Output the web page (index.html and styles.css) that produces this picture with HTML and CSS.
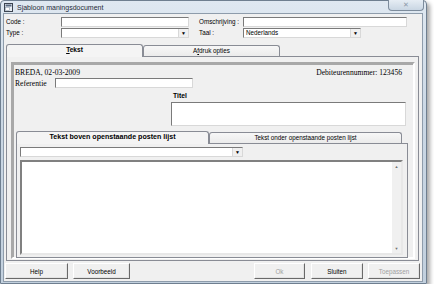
FILE: index.html
```html
<!DOCTYPE html>
<html lang="nl">
<head>
    <meta charset="UTF-8">
    <title>Sjabloon maningsdocument</title>
    <link rel="stylesheet" href="styles.css">
</head>
<body>
    <div class="window">
        <div class="titlebar">
            <svg class="app-icon" width="9" height="9" viewBox="0 0 9 9">
                <rect x="0.5" y="0.5" width="8" height="8" fill="#e8eef4" stroke="#3c4450"/>
                <rect x="1.5" y="1.5" width="6" height="2" fill="#5a6a80"/>
                <rect x="1.5" y="4.5" width="4" height="3" fill="#ffffff" stroke="#8090a0" stroke-width="0.5"/>
            </svg>
            <span class="title">Sjabloon maningsdocument</span>
            <div class="close-btn">✕</div>
        </div>

        <div class="client">
            <div class="header-form">
                <label>Code :</label>
                <div class="field"></div>
                <label class="second">Omschrijving :</label>
                <div class="field"></div>

                <label>Type :</label>
                <div class="field select"><span class="value"></span><span class="drop">▼</span></div>
                <label class="second">Taal :</label>
                <div class="field select short"><span class="value">Nederlands</span><span class="drop">▼</span></div>
            </div>

            <div class="tabs">
                <div class="tab active"><u>T</u>ekst</div>
                <div class="tab">A<u>f</u>druk opties</div>
            </div>

            <div class="tab-panel">
                <div class="group">
                    <div class="letter-head">
                        <span>BREDA, 02-03-2009</span>
                        <span>Debiteurennummer: 123456</span>
                    </div>
                    <div class="ref-row">
                        <span class="ref-label">Referentie</span>
                        <div class="field ref"></div>
                    </div>
                    <div class="titel-label">Titel</div>
                    <div class="field titel"></div>

                    <div class="tabs inner">
                        <div class="tab active">Tekst boven openstaande posten lijst</div>
                        <div class="tab">Tekst onder openstaande posten lijst</div>
                    </div>
                    <div class="inner-panel">
                        <div class="field select wide"><span class="value"></span><span class="drop">▼</span></div>
                        <div class="field memo">
                            <div class="scrollbar">
                                <span class="arrow">▲</span>
                                <span class="arrow">▼</span>
                            </div>
                        </div>
                    </div>
                </div>
            </div>

            <div class="buttons">
                <button class="btn help">Help</button>
                <button class="btn preview">Voorbeeld</button>
                <div class="spacer"></div>
                <button class="btn ok" disabled>Ok</button>
                <button class="btn">Sluiten</button>
                <button class="btn" disabled>Toepassen</button>
            </div>
        </div>
    </div>
</body>
</html>
```

FILE: styles.css
```css
body {
    margin: 0;
    background: #ffffff;
    font-family: "Liberation Sans", Arial, sans-serif;
    font-size: 6.3px;
    color: #000;
}
.window {
    width: 420px;
    padding: 0 3px 1px 2px;
    border: 1px solid #6f7f90;
    border-radius: 4px 4px 0 0;
    background: linear-gradient(180deg, #dfe8f1 0%, #cbd8e5 40%, #c2d0de 100%);
    box-shadow: 3px 3px 4px rgba(0, 0, 0, 0.35);
}
.titlebar {
    height: 12px;
    display: flex;
    align-items: center;
    position: relative;
}
.app-icon {
    margin: 1px 4px 0 1px;
}
.title {
    font-size: 7px;
    color: #1e2a38;
    padding-top: 1px;
}
.close-btn {
    position: absolute;
    right: -1px;
    top: -1px;
    width: 34px;
    height: 10px;
    border: 1px solid #7d8c9c;
    border-top: none;
    border-radius: 0 0 4px 4px;
    background: linear-gradient(180deg, #e6edf4, #c9d6e3);
    color: #8c99a8;
    font-size: 7px;
    text-align: center;
    line-height: 10px;
}
.client {
    background: #f0f0f0;
    border: 1px solid #8e9cab;
    padding: 3px 0 2px 0;
}

/* top form */
.header-form {
    display: grid;
    grid-template-columns: 55px 128px 54px 164px;
    grid-auto-rows: 10px;
    row-gap: 1px;
    padding-left: 2px;
    align-items: center;
}
.header-form label {
    line-height: 10px;
}
.header-form label.second {
    padding-left: 10px;
}
.field {
    background: #fff;
    border: 1px solid;
    border-color: #7a7a7a #d8d8d8 #d8d8d8 #7a7a7a;
    box-sizing: border-box;
    height: 10px;
}
.select {
    display: flex;
    align-items: center;
    justify-content: space-between;
}
.select .value {
    padding-left: 2px;
    line-height: 8px;
}
.select .drop {
    width: 9px;
    height: 8px;
    background: #f0f0f0;
    border-left: 1px solid #d8d8d8;
    font-size: 5px;
    line-height: 8px;
    text-align: center;
}
.select.short {
    width: 118px;
}

/* tabs */
.tabs {
    display: flex;
    align-items: flex-end;
    height: 12px;
    margin: 6px 0 0 2px;
    position: relative;
    z-index: 1;
}
.tab {
    width: 137px;
    height: 11px;
    box-sizing: border-box;
    border: 1px solid #898c95;
    border-bottom: none;
    border-radius: 3px 3px 0 0;
    background: linear-gradient(180deg, #f7f7f7, #ebebeb);
    text-align: center;
    line-height: 10px;
}
.tab.active {
    height: 13px;
    margin-bottom: -1px;
    background: #f4f4f4;
    font-weight: bold;
    font-size: 6.6px;
}
.tab-panel {
    margin: 0 3px 0 2px;
    border: 1px solid #898c95;
    padding: 5px 3px 1px 4px;
    height: 197px;
}
.group {
    border: 2px solid;
    border-color: #a8a8a8 #ffffff #ffffff #a8a8a8;
    box-shadow: 1px 1px 0 #a8a8a8 inset;
    height: 197px;
    box-sizing: border-box;
    padding: 3px 11px 0 2px;
    font-family: "Liberation Serif", "Times New Roman", serif;
    font-size: 7.6px;
}
.letter-head {
    display: flex;
    justify-content: space-between;
    height: 11px;
    line-height: 11px;
}
.ref-row {
    display: flex;
    align-items: center;
    height: 10px;
}
.ref-label {
    width: 40px;
}
.field.ref {
    width: 138px;
}
.titel-label {
    margin: 4px 0 0 158px;
    font-family: "Liberation Sans", Arial, sans-serif;
    font-weight: bold;
    font-size: 6.8px;
    height: 10px;
}
.field.titel {
    margin-left: 156px;
    width: 235px;
    height: 24px;
}
.tabs.inner {
    margin: 5px 0 0 1px;
    font-family: "Liberation Sans", Arial, sans-serif;
    font-size: 6.3px;
}
.tabs.inner .tab {
    width: 196px;
}
.tabs.inner .tab.active {
    font-size: 7.1px;
}
.inner-panel {
    margin-left: 1px;
    margin-right: -6px;
    border: 1px solid #898c95;
    padding: 3px 4px 2px 3px;
    height: 108px;
    font-family: "Liberation Sans", Arial, sans-serif;
}
.field.wide {
    width: 223px;
}
.field.memo {
    margin-top: 3px;
    height: 95px;
    border-width: 2px;
    border-color: #808080 #e8e8e8 #e8e8e8 #808080;
    display: flex;
    justify-content: flex-end;
}
.scrollbar {
    width: 9px;
    background: #f0f0f0;
    display: flex;
    flex-direction: column;
    justify-content: space-between;
    align-items: center;
    font-size: 4px;
    color: #707070;
    padding: 2px 0;
}

/* bottom buttons */
.buttons {
    display: flex;
    gap: 5px;
    margin-top: 2px;
    padding: 0 2px 0 1px;
}
.spacer {
    flex: 1;
}
.btn {
    height: 16px;
    width: 52px;
    padding: 0;
    font-family: "Liberation Sans", Arial, sans-serif;
    font-size: 6.3px;
    color: #000;
    background: #f0f0f0;
    border: 1px solid;
    border-color: #ffffff #696969 #696969 #ffffff;
    box-shadow: -1px -1px 0 #e3e3e3 inset;
}
.btn.help {
    width: 63px;
}
.btn.preview {
    width: 57px;
}
.btn.ok {
    width: 51px;
    margin-right: 1px;
}
.btn:disabled {
    color: #a0a0a0;
}
```
